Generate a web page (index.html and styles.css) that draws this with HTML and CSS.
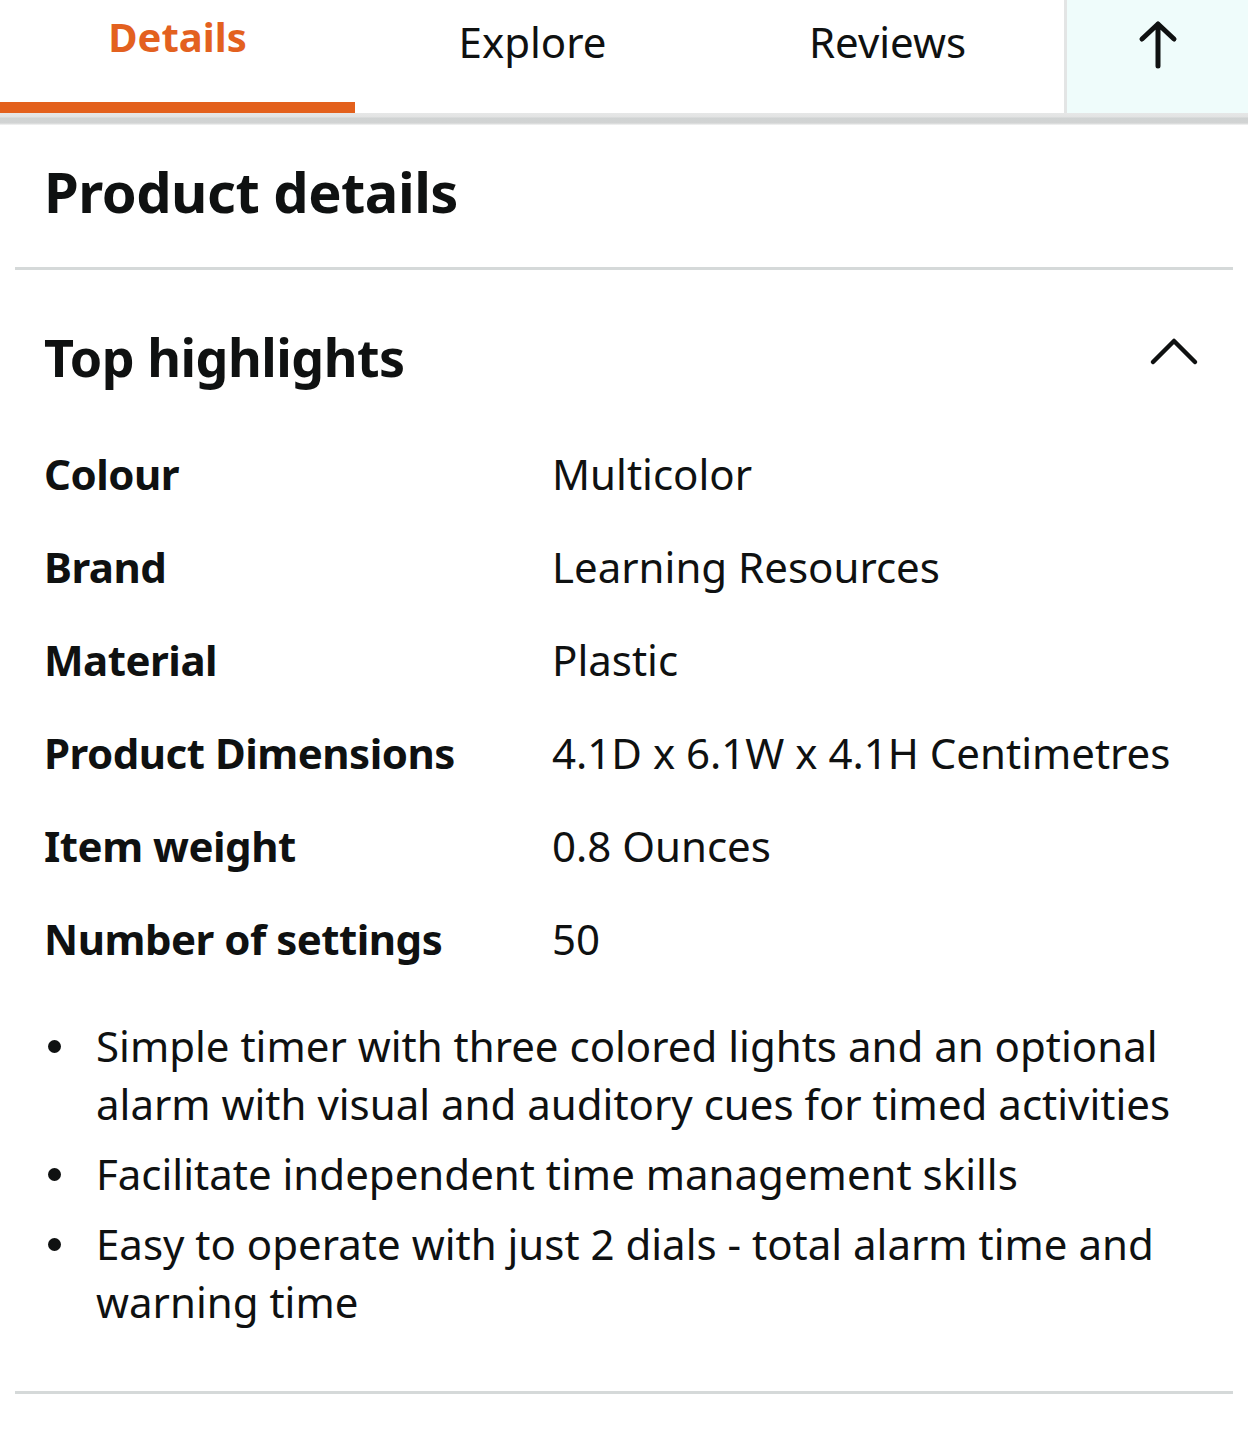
FILE: index.html
```html
<!DOCTYPE html>
<html lang="en">
<head>
  <meta charset="UTF-8">
  <meta name="viewport" content="width=device-width, initial-scale=1.0">
  <title>Product details</title>
  <link rel="stylesheet" href="styles.css">
</head>
<body>
  <nav class="tabs">
    <a class="tab tab-active" href="#">Details</a>
    <a class="tab" href="#">Explore</a>
    <a class="tab" href="#">Reviews</a>
    <button class="tab-top" aria-label="Back to top">
      <svg width="44" height="52" viewBox="0 0 44 52">
        <path d="M22 48 V6 M6 21 L22 6 L38 21" fill="none" stroke="#0f1111" stroke-width="5" stroke-linecap="round" stroke-linejoin="round"/>
      </svg>
    </button>
  </nav>
  <div class="tab-shadow"></div>

  <main class="details">
    <h1 class="details-title">Product details</h1>
    <hr class="divider">

    <section class="highlights">
      <div class="highlights-head">
        <h2>Top highlights</h2>
        <svg class="chevron" width="50" height="30" viewBox="0 0 50 30">
          <path d="M4 25 L25 4 L46 25" fill="none" stroke="#0f1111" stroke-width="4.5" stroke-linecap="round" stroke-linejoin="round"/>
        </svg>
      </div>

      <dl class="specs">
        <dt>Colour</dt><dd>Multicolor</dd>
        <dt>Brand</dt><dd>Learning Resources</dd>
        <dt>Material</dt><dd>Plastic</dd>
        <dt>Product Dimensions</dt><dd>4.1D x 6.1W x 4.1H Centimetres</dd>
        <dt>Item weight</dt><dd>0.8 Ounces</dd>
        <dt>Number of settings</dt><dd>50</dd>
      </dl>

      <ul class="bullets">
        <li>Simple timer with three colored lights and an optional alarm with visual and auditory cues for timed activities</li>
        <li>Facilitate independent time management skills</li>
        <li>Easy to operate with just 2 dials - total alarm time and warning time</li>
      </ul>
    </section>
    <hr class="divider divider-end">
  </main>
</body>
</html>
```

FILE: styles.css
```css
body {
  font-family: "Noto Sans", "Open Sans", sans-serif;
  background-color: #ffffff;
  color: #0f1111;
  margin: 0;
}

/* tab bar */
.tabs {
  display: flex;
  height: 113px;
  background: #fff;
}
.tab {
  width: 355px;
  box-sizing: border-box;
  display: flex;
  justify-content: center;
  padding-top: 14px;
  font-size: 42px;
  line-height: 56px;
  color: #0f1111;
  text-decoration: none;
}
.tab-active {
  padding-top: 9px;
  font-size: 40px;
  font-weight: 700;
  color: #e3611f;
  border-bottom: 11px solid #e3601c;
}
.tab-top {
  flex: 1;
  margin-left: -1px;
  border: 0;
  border-left: 3px solid #e3e5e5;
  background: #effcfb;
  padding: 18px 0 0;
  display: flex;
  justify-content: center;
  align-items: flex-start;
}
.tab-shadow {
  height: 12px;
  background: linear-gradient(to bottom, #e6e7e7 0, #e2e3e3 4px, #cfd2d2 5px, #d2d4d4 10px, #f6f6f6 12px);
}

/* content */
.details-title {
  margin: 34px 44px 0;
  font-size: 56px;
  line-height: 64px;
  font-weight: 700;
  letter-spacing: -0.5px;
}
.divider {
  margin: 44px 15px 0;
  border: 0;
  height: 3px;
  background: #d5d9d9;
}
.divider-end {
  margin-top: 60px;
}
.highlights {
  padding: 55px 44px 0;
}
.highlights-head {
  display: flex;
  justify-content: space-between;
  align-items: flex-start;
}
.highlights-head h2 {
  margin: 0;
  font-size: 52px;
  line-height: 64px;
  font-weight: 700;
  letter-spacing: -0.5px;
}
.chevron {
  margin: 12px 5px 0 0;
}

.specs {
  display: grid;
  grid-template-columns: 508px 1fr;
  row-gap: 37px;
  margin: 57px 0 0;
  font-size: 42px;
  line-height: 56px;
}
.specs dt {
  font-weight: 700;
  letter-spacing: -0.5px;
}
.specs dd {
  margin: 0;
}

.bullets {
  list-style: none;
  margin: 50px 0 0;
  padding: 0 0 0 52px;
  font-size: 42px;
  line-height: 58px;
}
.bullets li {
  position: relative;
  margin-bottom: 12px;
}
.bullets li:last-child {
  margin-bottom: 0;
}
.bullets li::before {
  content: "";
  position: absolute;
  left: -48px;
  top: 23px;
  width: 13px;
  height: 13px;
  border-radius: 50%;
  background: #0f1111;
}
```
